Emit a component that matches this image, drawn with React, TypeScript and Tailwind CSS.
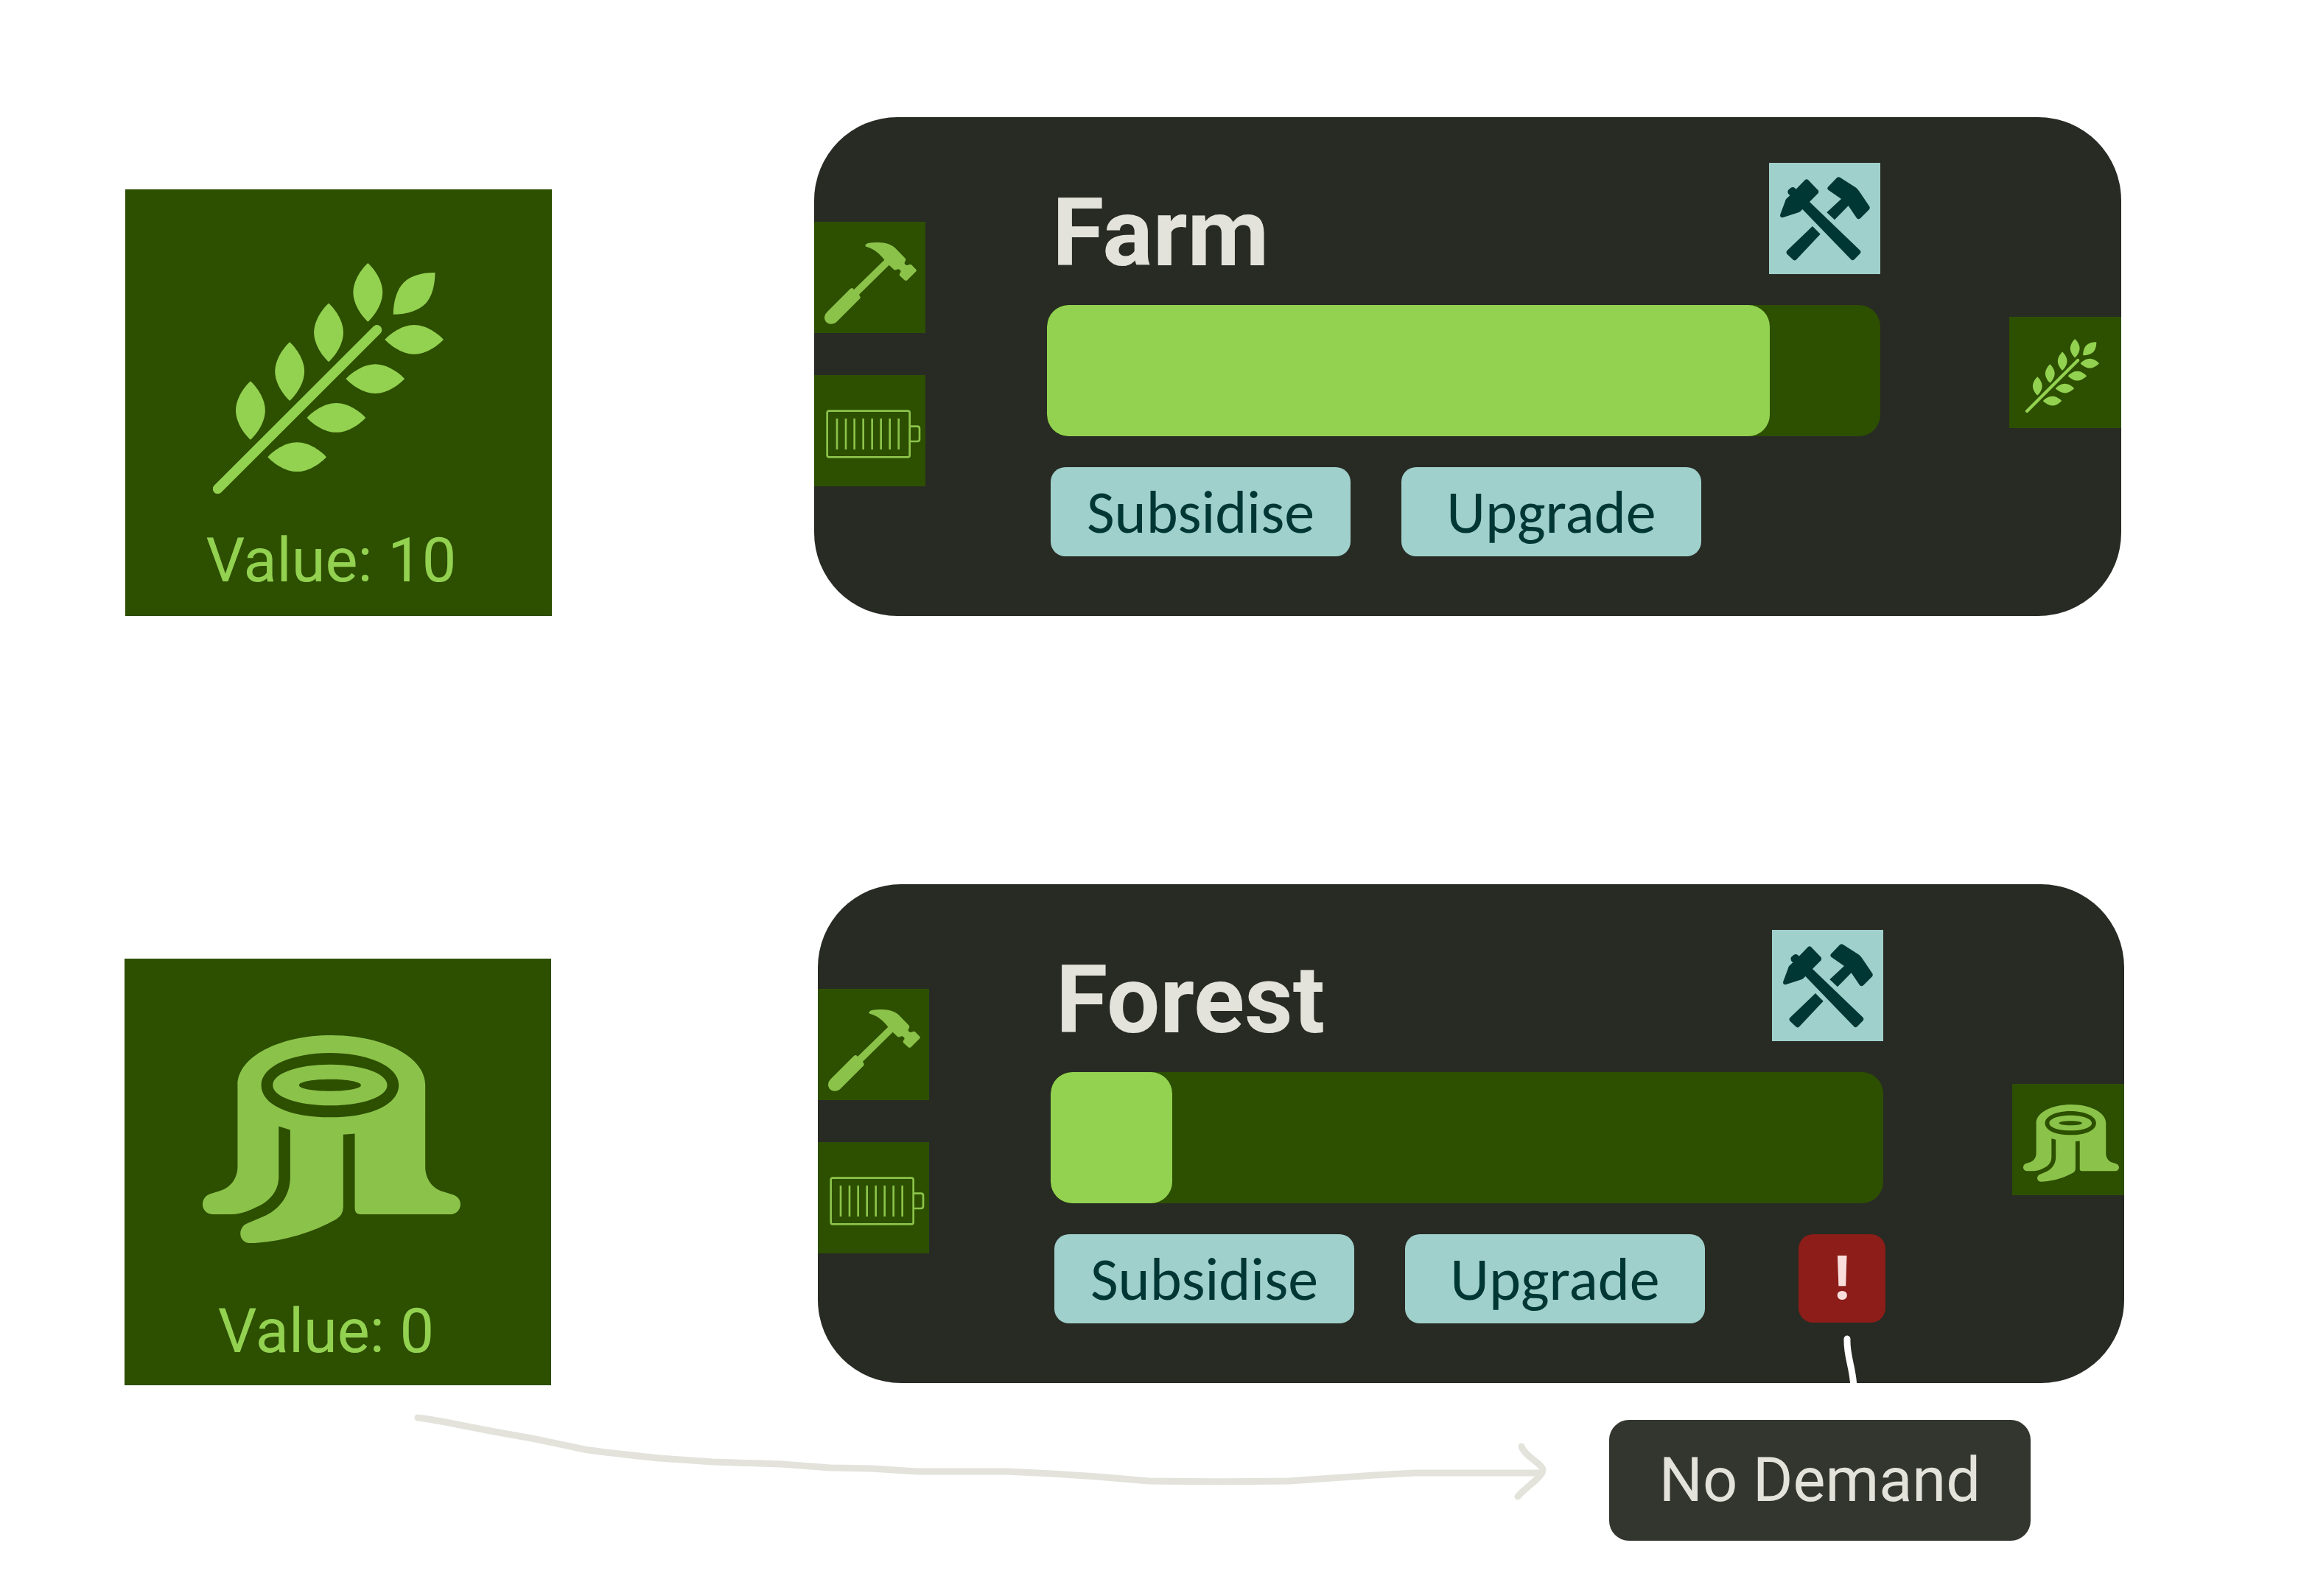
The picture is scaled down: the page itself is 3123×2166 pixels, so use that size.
import React from "react";

type IconProps = { className?: string };

const LEAF = "M0 0C20 18 52 60 52 104C52 148 20 190 0 208C-20 190 -52 148 -52 104C-52 60 -20 18 0 0Z";

function WheatIcon({ className }: IconProps) {
  return (
    <svg viewBox="339 281 817 818" className={className} fill="#93d250" aria-hidden="true">
      <path d="M356 1081L920 518" stroke="#93d250" strokeWidth="35" strokeLinecap="round" />
      <path d={LEAF} transform="translate(888 281)" />
      <path d={LEAF} transform="translate(749 423)" />
      <path d={LEAF} transform="translate(611 561)" />
      <path d={LEAF} transform="translate(472 699)" />
      <path d={LEAF} transform="translate(948 552) rotate(-90)" />
      <path d={LEAF} transform="translate(810 691) rotate(-90)" />
      <path d={LEAF} transform="translate(672 829) rotate(-90)" />
      <path d={LEAF} transform="translate(533 968) rotate(-90)" />
      <path d="M1126 315C1126 360 1114 402 1093 424C1070 448 1028 463 978 463C978 418 991 373 1015 350C1040 326 1080 314 1126 315Z" />
    </svg>
  );
}

function StumpIcon({ className }: IconProps) {
  return (
    <svg viewBox="301 302 915 738" className={className} fill="#8bc34a" fillRule="evenodd" aria-hidden="true">
      <path d="M425 478C425 380 570 302 758 302C945 302 1091 380 1091 478V768C1091 810 1115 846 1155 857L1190 868C1205 873 1216 885 1216 902C1216 922 1200 937 1182 937H860Q841 937 841 916V651L800 654V910Q800 940 775 955C690 1002 590 1034 473 1040C450 1040 435 1025 435 1005C435 990 445 975 458 970L515 946C575 920 612 870 612 803V638L571 625V803C571 850 545 885 500 908C465 925 440 937 402 937H336C315 937 301 920 301 902C301 885 312 870 328 865L362 854C400 843 425 810 425 768ZM509 479C509 547 606 593 753 593C900 593 997 547 997 479C997 411 886 365 753 365C620 365 509 411 509 479Z" />
      <path d="M550 479C550 437 640 406 753 406C866 406 956 437 956 479C956 521 866 551 753 551C640 551 550 521 550 479ZM643 479C643 467 692 458 753 458C814 458 863 467 863 479C863 491 814 500 753 500C692 500 643 491 643 479Z" />
    </svg>
  );
}

function HammerIcon({ className }: IconProps) {
  return (
    <svg viewBox="56 117 375 333" className={className} fill="#8bc34a" aria-hidden="true">
      <path d="M224 126C220 130 224 134 228 135C258 143 280 163 300 188L176 309L171 304Q167 302 161 306L67 400C54 413 53 428 62 440C72 452 92 452 105 441L201 345Q204 340 200 335L197 329L319 209L338 227Q343 231 349 228C357 222 367 229 367 237C362 243 360 247 362 252L382 271Q388 274 393 271L429 235Q432 231 429 227L410 208Q405 204 399 208C390 213 380 206 382 199C386 193 388 188 386 183L343 139C322 120 290 116 262 117C245 118 230 119 224 126Z" />
    </svg>
  );
}

function BatteryIcon({ className }: IconProps) {
  return (
    <svg viewBox="64 798 387 198" className={className} fill="none" stroke="#8bc34a" strokeWidth="8" aria-hidden="true">
      <rect x="69" y="803" width="336" height="188" rx="8" />
      <path d="M405 866H436Q445 866 445 875V918Q445 927 436 927H405" />
      <path d="M109 834V960M145 834V960M180 834V960M216 834V960M252 834V960M288 834V960M324 834V960M360 834V960" />
    </svg>
  );
}

function ToolsIcon({ className }: IconProps) {
  return (
    <svg viewBox="77 89 366 341" className={className} fill="#003735" aria-hidden="true">
      <path d="M179 101Q185 97 191 101L232 144Q236 150 232 156L197 191L404 390Q407 396 403 401L379 426Q372 431 366 426L168 221L160 229Q155 233 148 235L90 254Q77 257 77 244L97 190Q99 181 104 177L117 165L110 157Q106 150 110 143L120 134Q128 129 136 133L142 139Z" />
      <path d="M308 93Q315 87 322 92L384 132Q392 137 398 146L441 210Q444 216 440 222L404 258Q396 264 389 257L355 207L299 264L267 234L326 179L273 142Q267 136 272 130Z" />
      <path d="M209 290L241 322L142 427Q135 432 129 426L105 403Q100 396 105 390Z" />
    </svg>
  );
}

function FlowArrow() {
  return (
    <svg
      viewBox="560 1915 1545 130"
      className="absolute left-[560px] top-[715px] w-[1545px]"
      fill="none"
      stroke="#e3e3db"
      strokeWidth="9"
      strokeLinecap="round"
      strokeLinejoin="round"
      aria-hidden="true"
    >
      <path d="M567 1924C577 1925 588 1927 599 1929L671 1943L727 1953L793 1967C818 1971 858 1975 895 1979L967 1984L1060 1987L1127 1992L1183 1993L1244 1997H1366C1390 1998 1410 1999 1428 2000L1489 2004L1560 2010C1620 2011 1690 2011 1749 2010L1866 2002L1920 1999H2091" />
      <path d="M2065 1963C2069 1976 2094 1987 2094 1995C2094 2004 2070 2019 2060 2031" />
    </svg>
  );
}

function ResourceTile({ children, label, className }: { children: React.ReactNode; label: string; className: string }) {
  return (
    <section className={`flex h-[579px] w-[579px] shrink-0 flex-col items-center justify-between bg-[#2d4f00] ${className}`}>
      {children}
      <p className="text-[83px] leading-[96px] text-[#93d250]">{label}</p>
    </section>
  );
}

type CardProps = {
  name: string;
  progress: number;
  alert?: boolean;
  output: React.ReactNode;
};

function BuildingCard({ name, progress, alert = false, output }: CardProps) {
  const action =
    "h-[121px] w-[407px] rounded-[20px] bg-[#a0d0cc] font-['Carlito','Open_Sans',sans-serif] text-[82px] leading-[96px] text-[#003735]";
  return (
    <article className="flex w-full overflow-hidden rounded-[113px] bg-[#282b24]">
      <div className="flex shrink-0 flex-col gap-[57px] pt-[142px]">
        <div className="h-[151px] w-[151px] bg-[#2d4f00] pl-[14px] pt-[28px]">
          <HammerIcon className="w-[125px]" />
        </div>
        <div className="h-[151px] w-[151px] bg-[#2d4f00] pl-[16px] pt-[47px]">
          <BatteryIcon className="w-[129px]" />
        </div>
      </div>
      <div className="ml-[165px] flex flex-1 flex-col gap-[42px] pb-[81px] pt-[62px]">
        <header className="flex items-end justify-between pl-[7px]">
          <h2 className="text-[128px] font-bold leading-[112px] text-[#e3e3db]">{name}</h2>
          <div className="h-[151px] w-[151px] bg-[#a0d0cc] pl-[15px] pt-[19px]">
            <ToolsIcon className="w-[122px]" />
          </div>
        </header>
        <div
          role="progressbar"
          aria-label={`${name} progress`}
          aria-valuenow={progress}
          className="h-[178px] overflow-hidden rounded-[29px] bg-[#2d4f00]"
        >
          <div className="h-full rounded-[29px] bg-[#93d250]" style={{ width: `${progress}%` }} />
        </div>
        <div className="flex gap-[69px] pl-[5px]">
          <button type="button" className={action}>Subsidise</button>
          <button type="button" className={action}>Upgrade</button>
          {alert && (
            <div className="relative -mr-[3px] ml-auto">
              <button
                type="button"
                aria-describedby="demand-note"
                className="h-[120px] w-[118px] rounded-[20px] bg-[#8c1d18] text-[83px] font-bold leading-[96px] text-[#f9dedc]"
              >
                !
              </button>
              <svg viewBox="0 0 118 81" className="absolute left-0 top-full w-[118px]" fill="none" aria-hidden="true">
                <path d="M66 21C65 46 75 62 75 90" stroke="#ffffff" strokeWidth="9" strokeLinecap="round" />
              </svg>
            </div>
          )}
        </div>
      </div>
      <div className="ml-[175px] shrink-0 pt-[271px]">{output}</div>
    </article>
  );
}

export default function App() {
  return (
    <main className="flex min-h-screen flex-col gap-[364px] bg-white pt-[159px] font-['Roboto',sans-serif]">
      <div className="flex items-end gap-[356px] pl-[170px] pr-[244px]">
        <ResourceTile label="Value: 10" className="pb-[27px] pr-[20px] pt-[100px]">
          <WheatIcon className="mr-[8px] w-[313px]" />
        </ResourceTile>
        <BuildingCard
          name="Farm"
          progress={86.7}
          output={
            <div className="h-[151px] w-[152px] bg-[#2d4f00] pl-[22px] pt-[30px]">
              <WheatIcon className="w-[100px]" />
            </div>
          }
        />
      </div>
      <div className="relative flex items-start gap-[362px] pl-[169px] pr-[240px]">
        <ResourceTile label="Value: 0" className="mt-[101px] pb-[25px] pr-[32px] pt-[104px]">
          <StumpIcon className="ml-[14px] w-[350px]" />
        </ResourceTile>
        <div className="flex flex-1 flex-col">
          <BuildingCard
            name="Forest"
            progress={14.6}
            alert
            output={
              <div className="h-[151px] w-[152px] bg-[#2d4f00] pl-[15px] pt-[28px]">
                <StumpIcon className="w-[130px]" />
              </div>
            }
          />
          <p
            id="demand-note"
            className="mr-[127px] mt-[50px] self-end rounded-[27px] bg-[#33362e] px-[68px] py-[34px] text-[83px] leading-[96px] text-[#e3e3db]"
          >
            No Demand
          </p>
        </div>
        <FlowArrow />
      </div>
    </main>
  );
}
